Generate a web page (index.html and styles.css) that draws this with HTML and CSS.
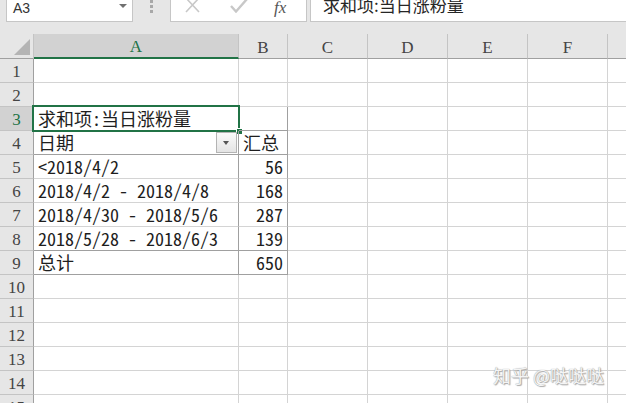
FILE: index.html
```html
<!DOCTYPE html>
<html lang="zh-CN">
<head>
  <meta charset="UTF-8">
  <title>数据透视表</title>
  <link rel="stylesheet" href="styles.css">
</head>
<body>
  <div class="toolbar">
    <div class="name-box">
      <span class="ref">A3</span>
      <span class="name-arrow"></span>
    </div>
    <div class="grip"><span></span><span></span><span></span></div>
    <div class="fx-buttons">
      <svg class="icon-cancel" width="15" height="13" viewBox="0 0 15 13">
        <path d="M1 -2 L14 12 M14 -2 L1 12" stroke="#c8c8c8" stroke-width="1.6" fill="none"/>
      </svg>
      <svg class="icon-enter" width="18" height="13" viewBox="0 0 18 13">
        <path d="M1 6 L6 11.5 L17 -1" stroke="#c8c8c8" stroke-width="2.4" fill="none"/>
      </svg>
      <span class="fx">fx</span>
    </div>
    <div class="formula">求和项:当日涨粉量</div>
  </div>

  <table class="sheet">
    <colgroup>
      <col class="col-head">
      <col class="col-a">
      <col class="col-b">
      <col class="col-std" span="5">
    </colgroup>
    <thead>
      <tr>
        <th class="corner"><span class="corner-tri"></span></th>
        <th class="sel">A</th>
        <th>B</th>
        <th>C</th>
        <th>D</th>
        <th>E</th>
        <th>F</th>
        <th></th>
      </tr>
    </thead>
    <tbody>
      <tr><th>1</th><td></td><td></td><td></td><td></td><td></td><td></td><td></td></tr>
      <tr><th>2</th><td></td><td></td><td></td><td></td><td></td><td></td><td></td></tr>
      <tr>
        <th class="sel">3</th>
        <td class="active pv-rule">
          <div class="selection"><span class="fill-handle"></span></div>
          求和项:当日涨粉量
        </td>
        <td class="pv-b pv-rule"></td>
        <td></td><td></td><td></td><td></td><td></td>
      </tr>
      <tr>
        <th>4</th>
        <td class="pv-a pv-rule filter-cell">日期<span class="filter-btn"></span></td>
        <td class="pv-b pv-rule">汇总</td>
        <td></td><td></td><td></td><td></td><td></td>
      </tr>
      <tr>
        <th>5</th>
        <td class="pv-a">&lt;2018/4/2</td>
        <td class="pv-b num">56</td>
        <td></td><td></td><td></td><td></td><td></td>
      </tr>
      <tr>
        <th>6</th>
        <td class="pv-a">2018/4/2 - 2018/4/8</td>
        <td class="pv-b num">168</td>
        <td></td><td></td><td></td><td></td><td></td>
      </tr>
      <tr>
        <th>7</th>
        <td class="pv-a">2018/4/30 - 2018/5/6</td>
        <td class="pv-b num">287</td>
        <td></td><td></td><td></td><td></td><td></td>
      </tr>
      <tr>
        <th>8</th>
        <td class="pv-a pv-rule">2018/5/28 - 2018/6/3</td>
        <td class="pv-b pv-rule num">139</td>
        <td></td><td></td><td></td><td></td><td></td>
      </tr>
      <tr>
        <th>9</th>
        <td class="pv-a pv-rule">总计</td>
        <td class="pv-b pv-rule num">650</td>
        <td></td><td></td><td></td><td></td><td></td>
      </tr>
      <tr><th>10</th><td></td><td></td><td></td><td></td><td></td><td></td><td></td></tr>
      <tr><th>11</th><td></td><td></td><td></td><td></td><td></td><td></td><td></td></tr>
      <tr><th>12</th><td></td><td></td><td></td><td></td><td></td><td></td><td></td></tr>
      <tr><th>13</th><td></td><td></td><td></td><td></td><td></td><td></td><td></td></tr>
      <tr><th>14</th><td></td><td></td><td></td><td></td><td></td><td></td><td></td></tr>
      <tr><th>15</th><td></td><td></td><td></td><td></td><td></td><td></td><td></td></tr>
    </tbody>
  </table>

  <div class="watermark">知乎 @哒哒哒</div>
</body>
</html>
```

FILE: styles.css
```css
body {
  margin: 0;
  width: 626px;
  height: 403px;
  overflow: hidden;
  position: relative;
  background: #fff;
  font-family: "Noto Sans CJK SC", sans-serif;
  color: #1e1e1e;
}

/* formula bar */

.toolbar {
  display: flex;
  align-items: flex-start;
  height: 34px;
  background: #e6e6e6;
}

.name-box {
  display: flex;
  justify-content: space-between;
  align-items: flex-start;
  width: 127px;
  height: 22px;
  margin-left: 6px;
  box-sizing: border-box;
  border: 1px solid #c6c6c6;
  border-top: none;
  background: #fff;
}

.name-box .ref {
  padding-left: 6px;
  font: 14px/16px "Liberation Sans", sans-serif;
  color: #333;
}

.name-arrow {
  width: 0;
  height: 0;
  margin: 4px 5px 0 0;
  border-left: 4px solid transparent;
  border-right: 4px solid transparent;
  border-top: 4px solid #707070;
}

.grip {
  display: flex;
  flex-direction: column;
  gap: 2px;
  margin-left: 17px;
}

.grip span {
  width: 3px;
  height: 3px;
  background: #a8a8a8;
}

.fx-buttons {
  display: flex;
  align-items: flex-start;
  width: 137px;
  height: 22px;
  margin-left: 17px;
  box-sizing: border-box;
  border: 1px solid #c6c6c6;
  border-top: none;
  background: #fff;
}

.icon-cancel {
  margin-left: 14px;
}

.icon-enter {
  margin-left: 30px;
}

.fx {
  margin-left: 26px;
  font: italic 17px/16px "Liberation Serif", serif;
  color: #555;
}

.formula {
  flex: 1;
  height: 22px;
  margin-left: 3px;
  padding-left: 12px;
  box-sizing: border-box;
  border-left: 1px solid #c6c6c6;
  border-bottom: 1px solid #c6c6c6;
  background: #fff;
  font-size: 17px;
  line-height: 10px;
  color: #262626;
  overflow: hidden;
  white-space: nowrap;
}

/* grid */

.sheet {
  border-collapse: separate;
  border-spacing: 0;
  table-layout: fixed;
  width: 688px;
}

.col-head { width: 34px; }
.col-a { width: 205px; }
.col-b { width: 49px; }
.col-std { width: 80px; }

.sheet tr {
  height: 24px;
}

.sheet th,
.sheet td {
  box-sizing: border-box;
  padding: 0;
  border-right: 1px solid #d4d4d4;
  border-bottom: 1px solid #d4d4d4;
  white-space: nowrap;
}

.sheet th {
  padding-top: 3px;
  background: #e6e6e6;
  font: 17px/20px "Liberation Serif", serif;
  color: #444;
  text-align: center;
  border-color: #c4c4c4;
}

.sheet thead th {
  border-bottom-color: #a0a0a0;
}

.sheet tbody th {
  border-right-color: #a0a0a0;
}

.sheet thead th.sel {
  background: #d2d2d2;
  color: #217346;
  border-bottom: 2px solid #217346;
}

.sheet tbody th.sel {
  background: #d2d2d2;
  color: #217346;
}

.corner {
  position: relative;
}

.corner-tri {
  position: absolute;
  right: 3px;
  bottom: 3px;
  width: 0;
  height: 0;
  border-left: 16px solid transparent;
  border-bottom: 16px solid #b4b4b4;
}

.sheet td {
  position: relative;
  padding: 0 4px 0 4px;
  font-size: 18px;
  line-height: 23px;
  font-feature-settings: "hwid" 1;
  vertical-align: bottom;
}

.sheet td.num {
  text-align: right;
}

/* pivot table borders */

.sheet td.pv-a,
.sheet td.pv-b {
  border-right-color: #a0a0a0;
}

.sheet td.pv-rule {
  border-bottom-color: #a0a0a0;
}

.filter-btn {
  position: absolute;
  top: 1px;
  right: 1px;
  width: 21px;
  height: 21px;
  box-sizing: border-box;
  border: 1px solid #b4b4b4;
  background: linear-gradient(#fafafa, #e4e4e4);
}

.filter-btn:after {
  content: "";
  position: absolute;
  left: 6px;
  top: 8px;
  border-left: 3.5px solid transparent;
  border-right: 3.5px solid transparent;
  border-top: 4px solid #555;
}

/* active cell */

.selection {
  position: absolute;
  top: -2px;
  left: -2px;
  right: -2px;
  bottom: -2px;
  border: 2px solid #217346;
}

.fill-handle {
  position: absolute;
  right: -5px;
  bottom: -5px;
  width: 7px;
  height: 7px;
  box-sizing: border-box;
  border: 1px solid #fff;
  background: #217346;
}

.watermark {
  position: absolute;
  left: 493px;
  top: 366px;
  font-size: 18px;
  line-height: 18px;
  color: #f4f4f4;
  text-shadow: 0 0 1px #888, 1px 1px 1px #aaa;
  white-space: nowrap;
}
```
